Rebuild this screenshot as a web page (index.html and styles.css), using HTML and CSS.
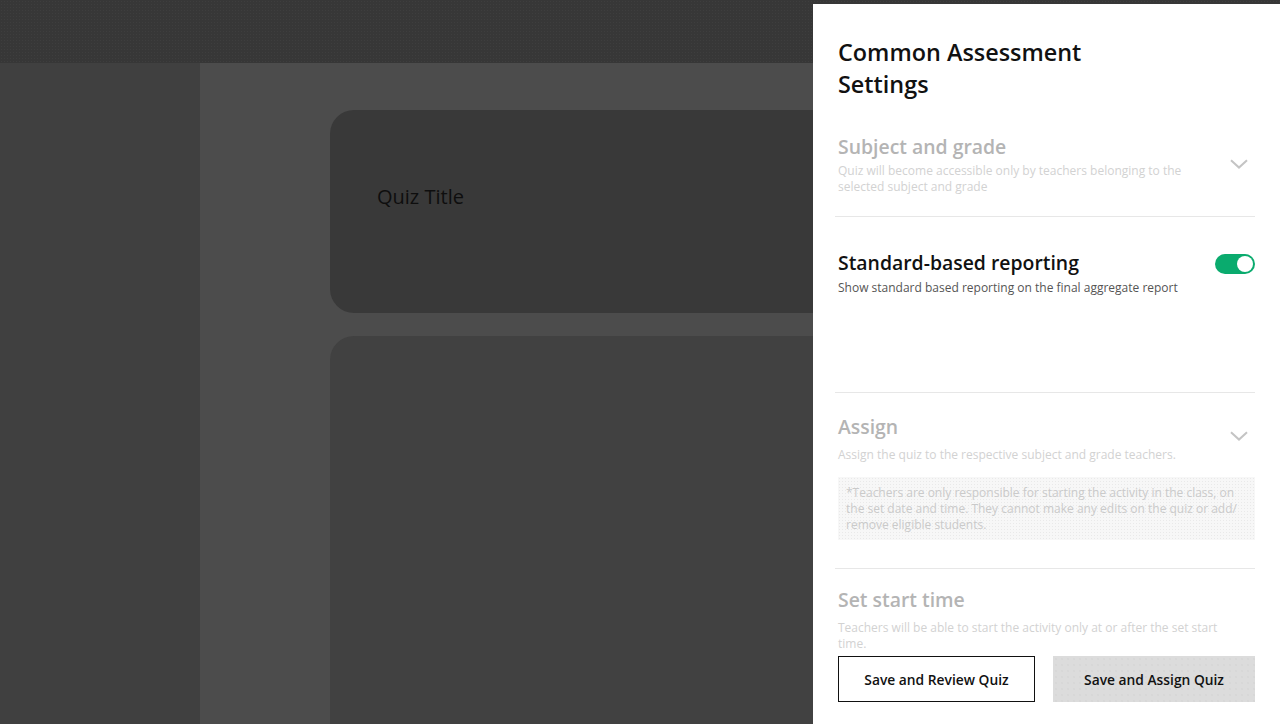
FILE: index.html
```html
<!DOCTYPE html>
<html lang="en">
<head>
<meta charset="utf-8">
<title>Common Assessment Settings</title>
<link rel="stylesheet" href="styles.css">
</head>
<body>
<div class="app">
  <header class="topbar"></header>
  <div class="body">
    <aside class="sidebar"></aside>
    <main class="main">
      <section class="card card-title">
        <div class="quiz-title">Quiz Title</div>
      </section>
      <section class="card card-questions"></section>
    </main>
  </div>
</div>

<aside class="drawer">
  <h1 class="drawer-title">Common Assessment Settings</h1>

  <div class="setting s-subject">
    <div class="setting-row">
      <div class="setting-text">
        <h2 class="setting-head muted">Subject and grade</h2>
        <p class="setting-desc faint">Quiz will become accessible only by teachers belonging to the selected subject and grade</p>
      </div>
      <svg class="chev" width="18" height="10" viewBox="0 0 18 10"><path d="M1 1.2 L9 8.6 L17 1.2" fill="none" stroke="#c4c4c4" stroke-width="2"/></svg>
    </div>
  </div>

  <div class="setting s-standard">
    <div class="setting-row top">
      <div class="setting-text">
        <h2 class="setting-head">Standard-based reporting</h2>
        <p class="setting-desc dark">Show standard based reporting on the final aggregate report</p>
      </div>
      <span class="toggle"><span class="knob"></span></span>
    </div>
  </div>

  <div class="setting s-assign">
    <div class="setting-row">
      <div class="setting-text">
        <h2 class="setting-head muted">Assign</h2>
        <p class="setting-desc faint gap">Assign the quiz to the respective subject and grade teachers.</p>
      </div>
      <svg class="chev chev-up" width="18" height="10" viewBox="0 0 18 10"><path d="M1 1.2 L9 8.6 L17 1.2" fill="none" stroke="#c4c4c4" stroke-width="2"/></svg>
    </div>
    <div class="note">*Teachers are only responsible for starting the activity in the class, on the set date and time. They cannot make any edits on the quiz or add/ remove eligible students.</div>
  </div>

  <div class="setting s-time">
    <h2 class="setting-head muted">Set start time</h2>
    <p class="setting-desc faint gap narrow">Teachers will be able to start the activity only at or after the set start time.</p>
  </div>

  <div class="actions">
    <button class="btn btn-outline">Save and Review Quiz</button>
    <button class="btn btn-fill">Save and Assign Quiz</button>
  </div>
</aside>
</body>
</html>
```

FILE: styles.css
```css
* { box-sizing: border-box; }

html, body {
  margin: 0;
  padding: 0;
  width: 1280px;
  height: 724px;
  overflow: hidden;
  font-family: "Open Sans", "Noto Sans", "Liberation Sans", sans-serif;
}

.app {
  display: flex;
  flex-direction: column;
  height: 724px;
  background: #4c4c4c;
}

.topbar {
  height: 63px;
  flex: 0 0 63px;
  background-color: #373737;
  background-image: radial-gradient(rgba(255,255,255,0.035) 0.6px, transparent 0.8px);
  background-size: 3px 3px;
}

.body {
  display: flex;
  flex: 1;
  min-height: 0;
}

.sidebar {
  width: 200px;
  flex: 0 0 200px;
  background: #404040;
}

.main {
  flex: 1;
  padding: 47px 0 0 130px;
  display: flex;
  flex-direction: column;
  gap: 23px;
  overflow: hidden;
}

.card {
  border-radius: 24px;
  width: 900px;
}

.card-title {
  height: 203px;
  flex: 0 0 203px;
  background: #393939;
  padding: 73px 47px 0;
}

.quiz-title {
  font-size: 20px;
  line-height: 28px;
  color: #0e0e0e;
}

.card-questions {
  flex: 0 0 500px;
  background: #414141;
}

/* Drawer */
.drawer {
  position: absolute;
  top: 4px;
  right: 0;
  width: 467px;
  height: 720px;
  background: #ffffff;
  padding: 32px 25px 0 25px;
  display: flex;
  flex-direction: column;
}

.drawer-title {
  margin: 0;
  max-width: 270px;
  font-size: 23.4px;
  line-height: 32px;
  font-weight: 600;
  color: #111;
}

.setting {
  border-bottom: 1px solid #e7e7e7;
  margin-left: -3px;
  padding-left: 3px;
}

.s-subject { padding-top: 33px; padding-bottom: 21px; }
.s-standard { padding-top: 32px; padding-bottom: 96px; }
.s-assign { padding-top: 20px; padding-bottom: 28px; }
.s-time { padding-top: 17px; border-bottom: none; }

.setting-row {
  display: flex;
  align-items: center;
  justify-content: space-between;
}

.setting-row.top { align-items: flex-start; }

.setting-text { max-width: 360px; }

.setting-head {
  margin: 0;
  font-size: 19.4px;
  line-height: 28px;
  font-weight: 600;
  color: #111;
}

.setting-head.muted { color: #b4b4b4; }

.setting-desc {
  margin: 2px 0 0 0;
  font-size: 12px;
  line-height: 16px;
}

.s-standard .setting-desc { margin-top: 3px; }
.setting-desc.gap { margin-top: 6px; }
.setting-desc.narrow { max-width: 380px; }
.setting-desc.faint { color: #d2d2d2; }
.setting-desc.dark { color: #555; }

.chev {
  display: block;
  margin-right: 7px;
  flex: 0 0 auto;
}

.chev-up { margin-bottom: 5px; }

.toggle {
  position: relative;
  width: 40px;
  height: 20px;
  margin-top: 5px;
  border-radius: 10px;
  background: #0aab6e;
  flex: 0 0 auto;
}

.knob {
  position: absolute;
  top: 2px;
  right: 2px;
  width: 16px;
  height: 16px;
  border-radius: 50%;
  background: #fff;
}

.note {
  margin-top: 14px;
  padding: 8px 8px 7px 8px;
  font-size: 12px;
  line-height: 16px;
  color: #cacaca;
  background-color: #f7f7f7;
  background-image: radial-gradient(#e9e9e9 0.7px, transparent 0.9px);
  background-size: 3px 3px;
}

.actions {
  display: flex;
  gap: 18px;
  margin-top: 4px;
}

.btn {
  height: 46px;
  font-family: inherit;
  font-size: 13.8px;
  font-weight: 600;
  color: #111;
  cursor: pointer;
}

.btn-outline {
  flex: 0 0 197px;
  background: #fff;
  border: 1px solid #111;
}

.btn-fill {
  flex: 1;
  border: none;
  background-color: #dcdcdc;
  background-image: radial-gradient(#d2d2d2 0.6px, transparent 0.8px);
  background-size: 6px 6px;
}
```
